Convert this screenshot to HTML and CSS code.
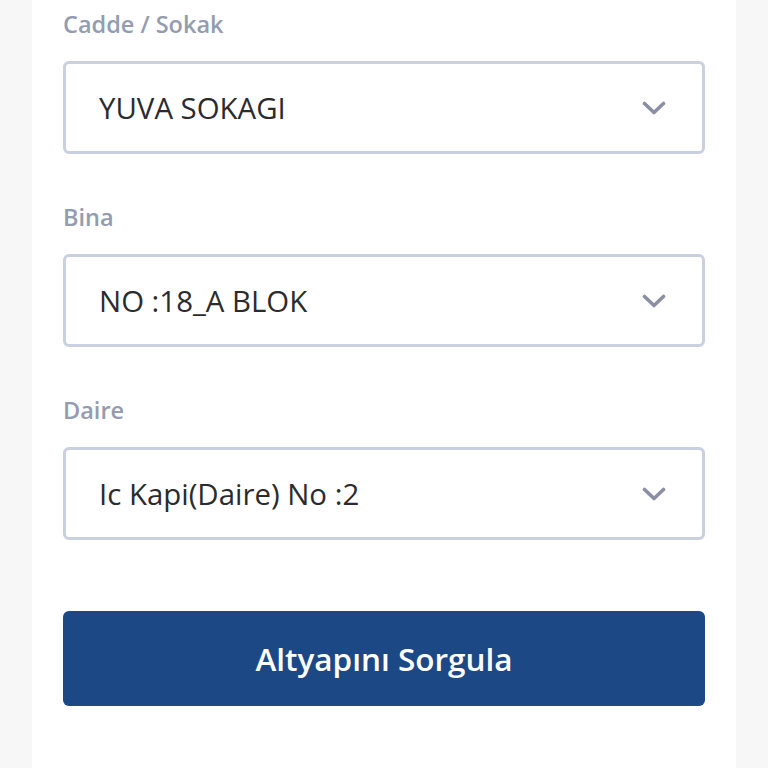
FILE: index.html
```html
<!DOCTYPE html>
<html lang="tr">
<head>
<meta charset="utf-8">
<title>Altyapı Sorgulama</title>
<link rel="stylesheet" href="styles.css">
</head>
<body>
<div class="card">
  <div class="field">
    <div class="label">Cadde / Sokak</div>
    <div class="select">
      <span class="value">YUVA SOKAGI</span>
      <svg class="chev" width="24" height="14" viewBox="0 0 24 14"><path d="M2.5 2.5 L12 11.5 L21.5 2.5" fill="none" stroke="#8a8fa3" stroke-width="3.6" stroke-linecap="round" stroke-linejoin="round"/></svg>
    </div>
  </div>
  <div class="field">
    <div class="label">Bina</div>
    <div class="select">
      <span class="value">NO :18_A BLOK</span>
      <svg class="chev" width="24" height="14" viewBox="0 0 24 14"><path d="M2.5 2.5 L12 11.5 L21.5 2.5" fill="none" stroke="#8a8fa3" stroke-width="3.6" stroke-linecap="round" stroke-linejoin="round"/></svg>
    </div>
  </div>
  <div class="field">
    <div class="label">Daire</div>
    <div class="select">
      <span class="value">Ic Kapi(Daire) No :2</span>
      <svg class="chev" width="24" height="14" viewBox="0 0 24 14"><path d="M2.5 2.5 L12 11.5 L21.5 2.5" fill="none" stroke="#8a8fa3" stroke-width="3.6" stroke-linecap="round" stroke-linejoin="round"/></svg>
    </div>
  </div>
  <button class="submit">Altyapını Sorgula</button>
</div>
</body>
</html>
```
FILE: styles.css
```css
html, body {
  margin: 0;
  padding: 0;
  background: #f7f7f8;
  font-family: "Open Sans", "Noto Sans", sans-serif;
}
.card {
  margin: 0 32px;
  background: #ffffff;
  min-height: 768px;
  padding: 8px 31px 0;
  box-sizing: border-box;
}
.field {
  margin-bottom: 47px;
}
.field:last-of-type {
  margin-bottom: 71px;
}
.label {
  font-size: 23.5px;
  line-height: 32px;
  font-weight: 600;
  color: #939cb0;
  margin-bottom: 21px;
}
.select {
  height: 93px;
  box-sizing: border-box;
  border: 3px solid #cad0df;
  border-radius: 6px;
  display: flex;
  align-items: center;
  justify-content: space-between;
  padding: 0 36px 0 33px;
}
.value {
  font-size: 29.4px;
  color: #2b2b2e;
}
.chev {
  display: block;
}
.submit {
  display: block;
  width: 100%;
  height: 95px;
  border: none;
  border-radius: 6px;
  background: #1c4886;
  color: #ffffff;
  font-family: "Open Sans", "Noto Sans", sans-serif;
  font-size: 31.5px;
  font-weight: 600;
}
```
